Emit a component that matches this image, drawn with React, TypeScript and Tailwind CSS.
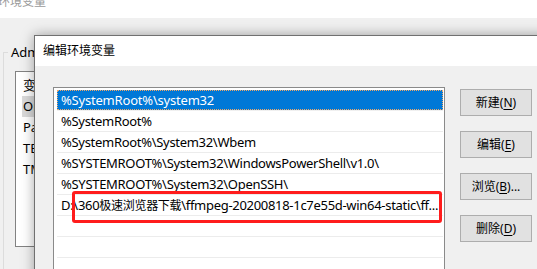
import React from "react";

const paths: React.ReactNode[] = [
  "%SystemRoot%\\system32",
  "%SystemRoot%",
  "%SystemRoot%\\System32\\Wbem",
  "%SYSTEMROOT%\\System32\\WindowsPowerShell\\v1.0\\",
  "%SYSTEMROOT%\\System32\\OpenSSH\\",
  <>
    D:\360<span className="text-[12px]">极速浏览器下载</span>\ffmpeg-20200818-1c7e55d-win64-static\ff...
  </>,
  "",
  "",
];

const buttons = [
  { label: "新建", key: "N" },
  { label: "编辑", key: "E" },
  { label: "浏览", key: "B", dots: true },
  { label: "删除", key: "D" },
];

const font = { fontFamily: '"Noto Sans", "Noto Sans CJK SC", sans-serif' };

function WinButton({ label, keyChar, dots }: { label: string; keyChar: string; dots?: boolean }) {
  return (
    <div className="w-[72px] h-[27px] bg-[#e1e1e1] border border-[#adadad] flex items-center justify-center text-[12px] text-black">
      {label}(<span className="underline underline-offset-2">{keyChar}</span>){dots ? "..." : ""}
    </div>
  );
}

export default function App() {
  return (
    <div className="relative w-[537px] h-[269px] overflow-hidden bg-[#f0f0f0]" style={font}>
      {/* Back window: 环境变量 */}
      <div className="h-[18px] bg-white overflow-hidden">
        <div className="-mt-[7px] -ml-[2px] text-[12px] leading-[18px] text-[#9a9a9a]">环境变量</div>
      </div>
      <div className="pl-[3px] pt-[34px]">
        <div className="relative h-[240px] border border-[#dcdcdc] pt-[18px] pl-[11px]">
          <div className="absolute -top-[10px] left-[4px] px-[3px] bg-[#f0f0f0] text-[13px] leading-[18px] text-black">
            Administrator 的用户变量
          </div>
          <div className="w-[300px] h-[176px] bg-white border border-[#828282] pt-[3px] text-[13px] text-black">
            <div className="h-[21px] pl-[7px] leading-[21px]">变量</div>
            <div className="h-[21px] ml-[6px] pl-[1px] leading-[21px] bg-[#d9d9d9]">OneDrive</div>
            <div className="h-[21px] pl-[7px] leading-[21px]">Path</div>
            <div className="h-[21px] pl-[7px] leading-[21px]">TEMP</div>
            <div className="h-[21px] pl-[7px] leading-[21px]">TMP</div>
          </div>
        </div>
      </div>

      {/* Front dialog: 编辑环境变量 */}
      <div className="absolute left-[34px] top-[35px] w-[520px] h-[250px] border border-[#707070] bg-[#f0f0f0] shadow-[0_0_12px_rgba(0,0,0,0.35)]">
        <div className="h-[30px] bg-white flex items-center pl-[8px] text-[12px] text-black">编辑环境变量</div>
        <div className="flex pt-[21px] pl-[18px] gap-[15px]">
          <div className="w-[392px] h-[200px] bg-white border border-[#8a8a8a] pt-[2px] pl-[3px] pr-[1px]">
            {paths.map((p, i) => (
              <div
                key={i}
                className={
                  i === 0
                    ? "h-[21px] border-b border-[#f0f0f0]"
                    : "h-[21px] border-b border-[#ececec]"
                }
              >
                <div
                  className={
                    i === 0
                      ? "h-[20px] bg-[#0078d7] border border-dotted border-[#f0a868] pl-[3px] text-white text-[13px] leading-[18px] tracking-[-0.2px] whitespace-nowrap"
                      : "h-[20px] pl-[4px] text-black text-[13px] leading-[20px] tracking-[-0.3px] whitespace-nowrap overflow-hidden"
                  }
                >
                  {p}
                </div>
              </div>
            ))}
          </div>
          <div className="flex flex-col gap-[15px] pt-[2px]">
            {buttons.map((b) => (
              <WinButton key={b.key} label={b.label} keyChar={b.key} dots={b.dots} />
            ))}
          </div>
        </div>
      </div>

      {/* red annotation */}
      <div className="absolute left-[72px] top-[191px] w-[370px] h-[32px] border-[3px] border-[#ff1c1c] rounded-[3px]" />
    </div>
  );
}
